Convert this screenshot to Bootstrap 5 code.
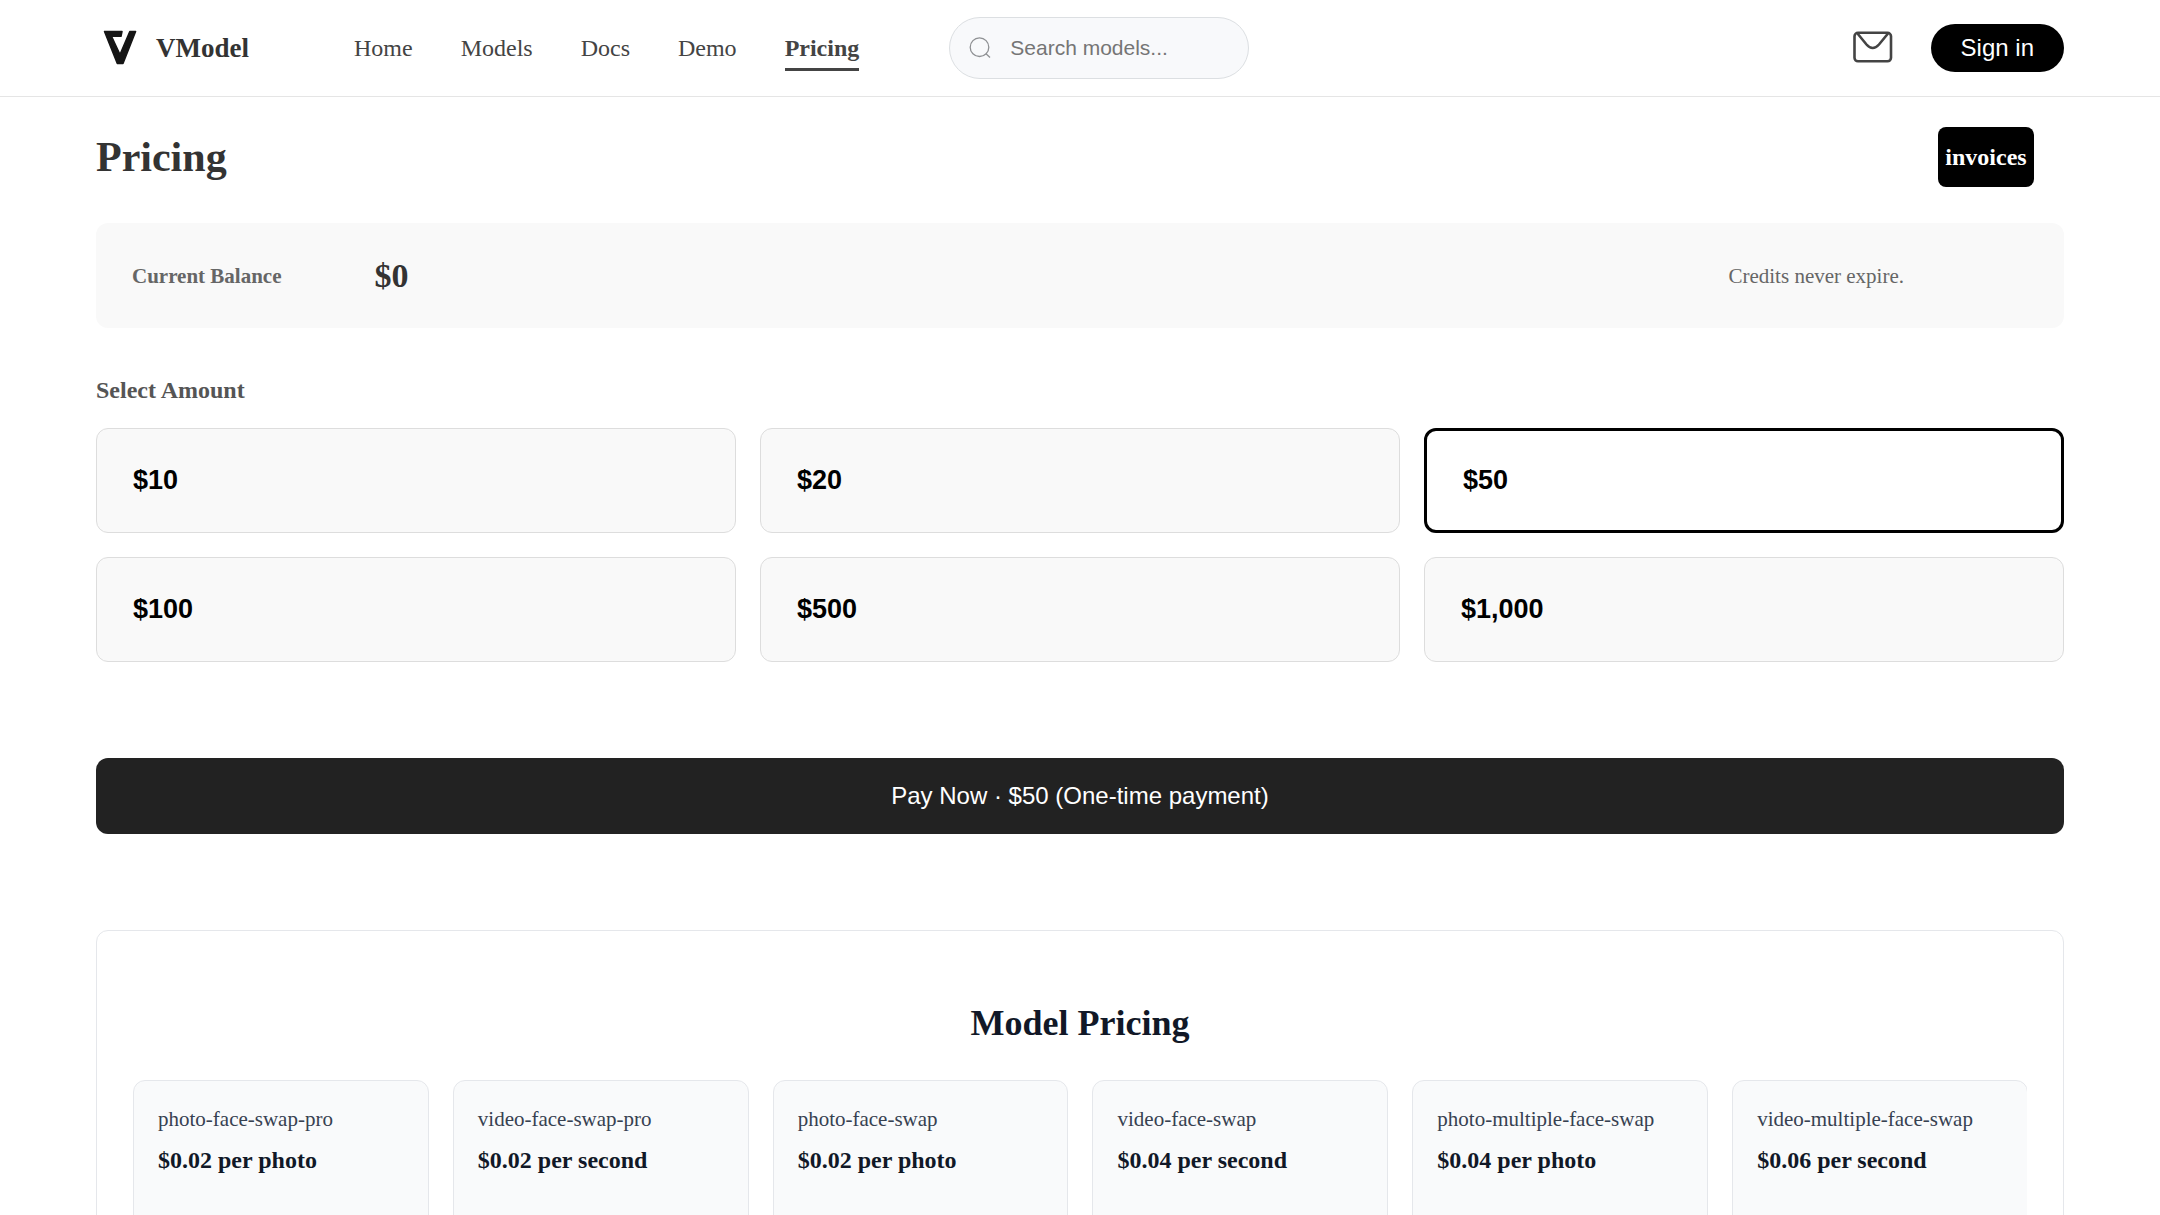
<!DOCTYPE html>
<html lang="en">
<head>
<meta charset="utf-8">
<meta name="viewport" content="width=device-width, initial-scale=1">
<title>Pricing - VModel</title>
<link rel="stylesheet" href="https://cdn.jsdelivr.net/npm/bootstrap@5.3.0/dist/css/bootstrap.min.css">
<style>
  :root { --sans: "Liberation Sans", Arial, sans-serif; --serif: "Liberation Serif", "Times New Roman", serif; }
  body { font-family: var(--serif); font-size: 24px; line-height: 28px; color: #333; background: #fff; }
  .page-gutter { padding-left: 96px; padding-right: 96px; }
  .site-header { min-height: 97px; border-bottom: 1px solid #e5e5e5; }
  .brand-link { gap: 12px; margin-right: 105px; font-size: 27px; font-weight: 700; color: #333; text-decoration: none; }
  .main-nav { gap: 48px; margin-right: 90px; }
  .main-nav .nav-link { padding: 9px 0 6px; border-bottom: 3px solid transparent; color: #444; }
  .main-nav .nav-link.active { font-weight: 700; color: #444; border-color: #444; }
  .search-box { width: 300px; height: 62px; padding: 0 19px; gap: 19px; border: 1px solid #dcdfe2; border-radius: 31px; background: #f8f9fb; }
  .search-box input { font-family: var(--sans); font-size: 21px; line-height: 28px; min-width: 0; color: #333; outline: 0; }
  .search-box input::placeholder { color: #757575; opacity: 1; }
  .sign-btn { font-family: var(--sans); font-size: 24px; line-height: 28px; padding: 10px 30px; border: 0; border-radius: 24px; background: #000; color: #fff; }
  .title-row { margin: 30px 30px 36px 0; }
  .title-row h1 { font-size: 42px; line-height: 48px; font-weight: 700; }
  .invoice-btn { font-size: 24px; line-height: 28px; font-weight: 700; padding: 16px 7px; min-width: 96px; border: 0; border-radius: 8px; background: #000; color: #fff; }
  .balance-bar { min-height: 105px; padding: 0 36px; border-radius: 12px; background: #f9f9f9; font-size: 21px; color: #666; }
  .balance-bar .amount { font-size: 34px; font-weight: 700; color: #333; margin-left: 93px; }
  .balance-bar .note { margin-right: 124px; }
  .section-label { font-size: 24px; line-height: 28px; font-weight: 700; color: #555; margin: 48px 0 24px; }
  .amount-btn { font-family: var(--sans); font-size: 27px; line-height: 31px; font-weight: 700; padding: 36px; border: 1px solid #ddd; border-radius: 12px; background: #f9f9f9; color: #000; text-align: left; width: 100%; min-height: 105px; }
  .amount-btn.selected { border: 3px solid #000; background: #fff; padding-top: 34px; padding-bottom: 34px; }
  .pay-btn { font-family: var(--sans); font-size: 24px; line-height: 28px; padding: 24px; margin: 96px 0; border: 0; border-radius: 12px; background: #222; color: #fff; }
  .model-panel { padding: 72px 36px; border: 1px solid #e5e7eb; border-radius: 12px; }
  .model-panel h2 { font-size: 36px; line-height: 41px; font-weight: 700; color: #111827; margin-bottom: 36px; }
  .model-strip { gap: 24px; overflow: hidden; }
  .model-item { flex: 0 0 calc((100% - 119px) / 6); min-height: 180px; padding: 24px; border: 1px solid #e5e7eb; border-radius: 12px; background: #f9fafb; white-space: nowrap; }
  .model-name { font-size: 21px; font-weight: 400; line-height: 28px; color: #374151; margin-bottom: 13px; }
  .model-price { font-weight: 700; color: #111827; margin: 0; }
</style>
</head>
<body>
<header class="site-header page-gutter d-flex align-items-center">
  <a class="brand-link d-flex align-items-center" href="#">
    <svg width="48" height="48" viewBox="0 0 48 48" aria-hidden="true">
      <path d="M8.500 7.500H26L25 12.300H15.500L24 30.500L33.800 7.500H39.600L27 39.500H21.300Z" fill="#151515" stroke="#151515" stroke-width="1.500" stroke-linejoin="round"/>
    </svg>
    VModel
  </a>
  <nav class="nav main-nav" aria-label="Main">
    <a class="nav-link" href="#">Home</a>
    <a class="nav-link" href="#">Models</a>
    <a class="nav-link" href="#">Docs</a>
    <a class="nav-link" href="#">Demo</a>
    <a class="nav-link active" aria-current="page" href="#">Pricing</a>
  </nav>
  <form class="search-box d-flex align-items-center" role="search">
    <svg class="flex-shrink-0" width="22" height="22" viewBox="0 0 22 22" fill="none" stroke="#8e9093" stroke-width="1.300" aria-hidden="true">
      <circle cx="10.500" cy="10.200" r="9.300"/><path d="M17 16.800L21 20.500"/>
    </svg>
    <input class="border-0 bg-transparent p-0 flex-grow-1" type="search" placeholder="Search models..." aria-label="Search models">
  </form>
  <div class="d-flex align-items-center ms-auto">
    <a href="#" class="d-flex me-2 pe-4" aria-label="Email">
      <svg width="48" height="48" viewBox="0 0 48 48" fill="none" stroke="#444" stroke-width="2.600" aria-hidden="true">
        <rect x="3.500" y="8.800" width="36.500" height="28.500" rx="3.500"/>
        <path d="M6.500 9.500L15.500 20.500Q21.700 27.500 28 20.500L37 9.500"/>
      </svg>
    </a>
    <button class="btn sign-btn" type="button">Sign in</button>
  </div>
</header>

<main class="page-gutter">
  <div class="title-row d-flex justify-content-between align-items-center">
    <h1 class="mb-0">Pricing</h1>
    <button class="btn invoice-btn" type="button">invoices</button>
  </div>

  <section class="balance-bar d-flex align-items-center">
    <strong>Current Balance</strong>
    <span class="amount">$0</span>
    <span class="note ms-auto">Credits never expire.</span>
  </section>

  <h2 class="section-label">Select Amount</h2>
  <div class="row row-cols-3 g-4">
    <div class="col"><button class="btn amount-btn" type="button">$10</button></div>
    <div class="col"><button class="btn amount-btn" type="button">$20</button></div>
    <div class="col"><button class="btn amount-btn selected" type="button" aria-pressed="true">$50</button></div>
    <div class="col"><button class="btn amount-btn" type="button">$100</button></div>
    <div class="col"><button class="btn amount-btn" type="button">$500</button></div>
    <div class="col"><button class="btn amount-btn" type="button">$1,000</button></div>
  </div>

  <button class="btn pay-btn w-100" type="button">Pay Now · $50 (One-time payment)</button>

  <section class="model-panel">
    <h2 class="text-center">Model Pricing</h2>
    <div class="model-strip d-flex">
      <article class="model-item"><h3 class="model-name">photo-face-swap-pro</h3><p class="model-price">$0.02 per photo</p></article>
      <article class="model-item"><h3 class="model-name">video-face-swap-pro</h3><p class="model-price">$0.02 per second</p></article>
      <article class="model-item"><h3 class="model-name">photo-face-swap</h3><p class="model-price">$0.02 per photo</p></article>
      <article class="model-item"><h3 class="model-name">video-face-swap</h3><p class="model-price">$0.04 per second</p></article>
      <article class="model-item"><h3 class="model-name">photo-multiple-face-swap</h3><p class="model-price">$0.04 per photo</p></article>
      <article class="model-item"><h3 class="model-name">video-multiple-face-swap</h3><p class="model-price">$0.06 per second</p></article>
    </div>
  </section>
</main>
<script src="https://cdn.jsdelivr.net/npm/bootstrap@5.3.0/dist/js/bootstrap.bundle.min.js"></script>
</body>
</html>
